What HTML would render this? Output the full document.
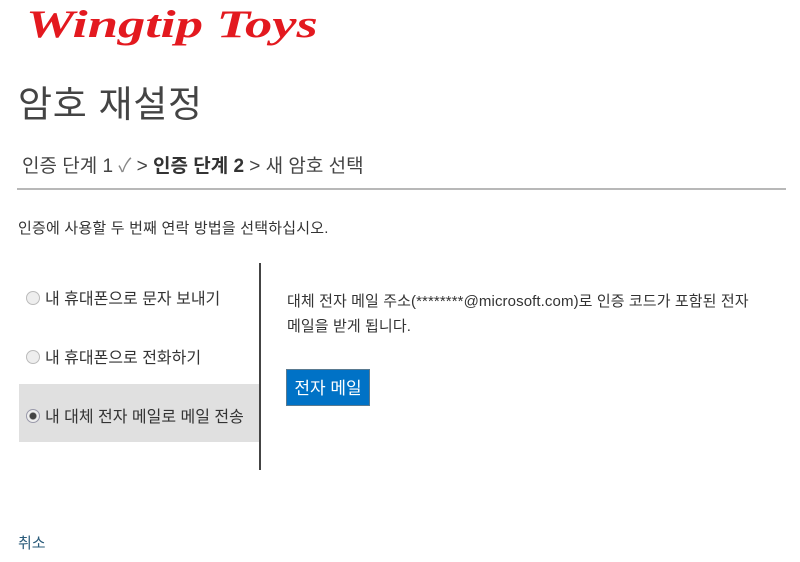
<!DOCTYPE html>
<html><head><meta charset="utf-8"><style>
body{margin:0;width:800px;height:562px;background:#fff;font-family:"Liberation Sans","Noto Sans CJK KR",sans-serif;color:#333;position:relative;overflow:hidden}
.a{position:absolute;white-space:nowrap;line-height:1.2}
.logo{left:26px;top:5px;font-family:"Liberation Serif",serif;font-style:italic;font-weight:bold;font-size:39px;line-height:40px;color:#e3191f;transform:scaleX(1.4);transform-origin:left}
.radio{display:inline-block;width:12px;height:12px;border:1px solid #bbb;border-radius:50%;background:#eee;vertical-align:-1px;margin-right:5px}
</style></head><body>
<div class="a logo">Wingtip Toys</div>
<div class="a" style="left:18px;top:83px;font-size:37px;letter-spacing:0.7px;color:#444">암호 재설정</div>
<div class="a" style="left:22px;top:156px;font-size:19px;letter-spacing:0;color:#444">인증 단계 1 <span style="color:#888">✓</span> &gt; <b style="color:#333">인증 단계 2</b> &gt; 새 암호 선택</div>
<div class="a" style="left:17px;top:188px;width:769px;height:2px;background:#b8b8b8"></div>
<div class="a" style="left:18px;top:220px;font-size:15px;letter-spacing:0.2px">인증에 사용할 두 번째 연락 방법을 선택하십시오.</div>
<div class="a" style="left:259px;top:263px;width:2px;height:207px;background:#444"></div>
<div class="a" style="left:26px;top:290px;font-size:16px"><span class="radio"></span>내 휴대폰으로 문자 보내기</div>
<div class="a" style="left:26px;top:349px;font-size:16px"><span class="radio"></span>내 휴대폰으로 전화하기</div>
<div class="a" style="left:19px;top:384px;width:240px;height:58px;background:#e0e0e0"></div>
<div class="a" style="left:26px;top:408px;font-size:16px"><span class="radio" style="border-color:#99a;background:radial-gradient(#444 0 3px,#eee 4px)"></span>내 대체 전자 메일로 메일 전송</div>
<div class="a" style="left:287px;top:289px;font-size:15px;line-height:25px;letter-spacing:0.1px">대체 전자 메일 주소(********@microsoft.com)로 인증 코드가 포함된 전자<br>메일을 받게 됩니다.</div>
<div class="a" style="left:286px;top:369px;width:82px;height:35px;background:#0072c6;border:1px solid #5a7a90;color:#fff;font-size:17px;line-height:38px;text-align:center">전자 메일</div>
<div class="a" style="left:18px;top:535px;font-size:15px;color:#2a5b7a">취소</div>
</body></html>
